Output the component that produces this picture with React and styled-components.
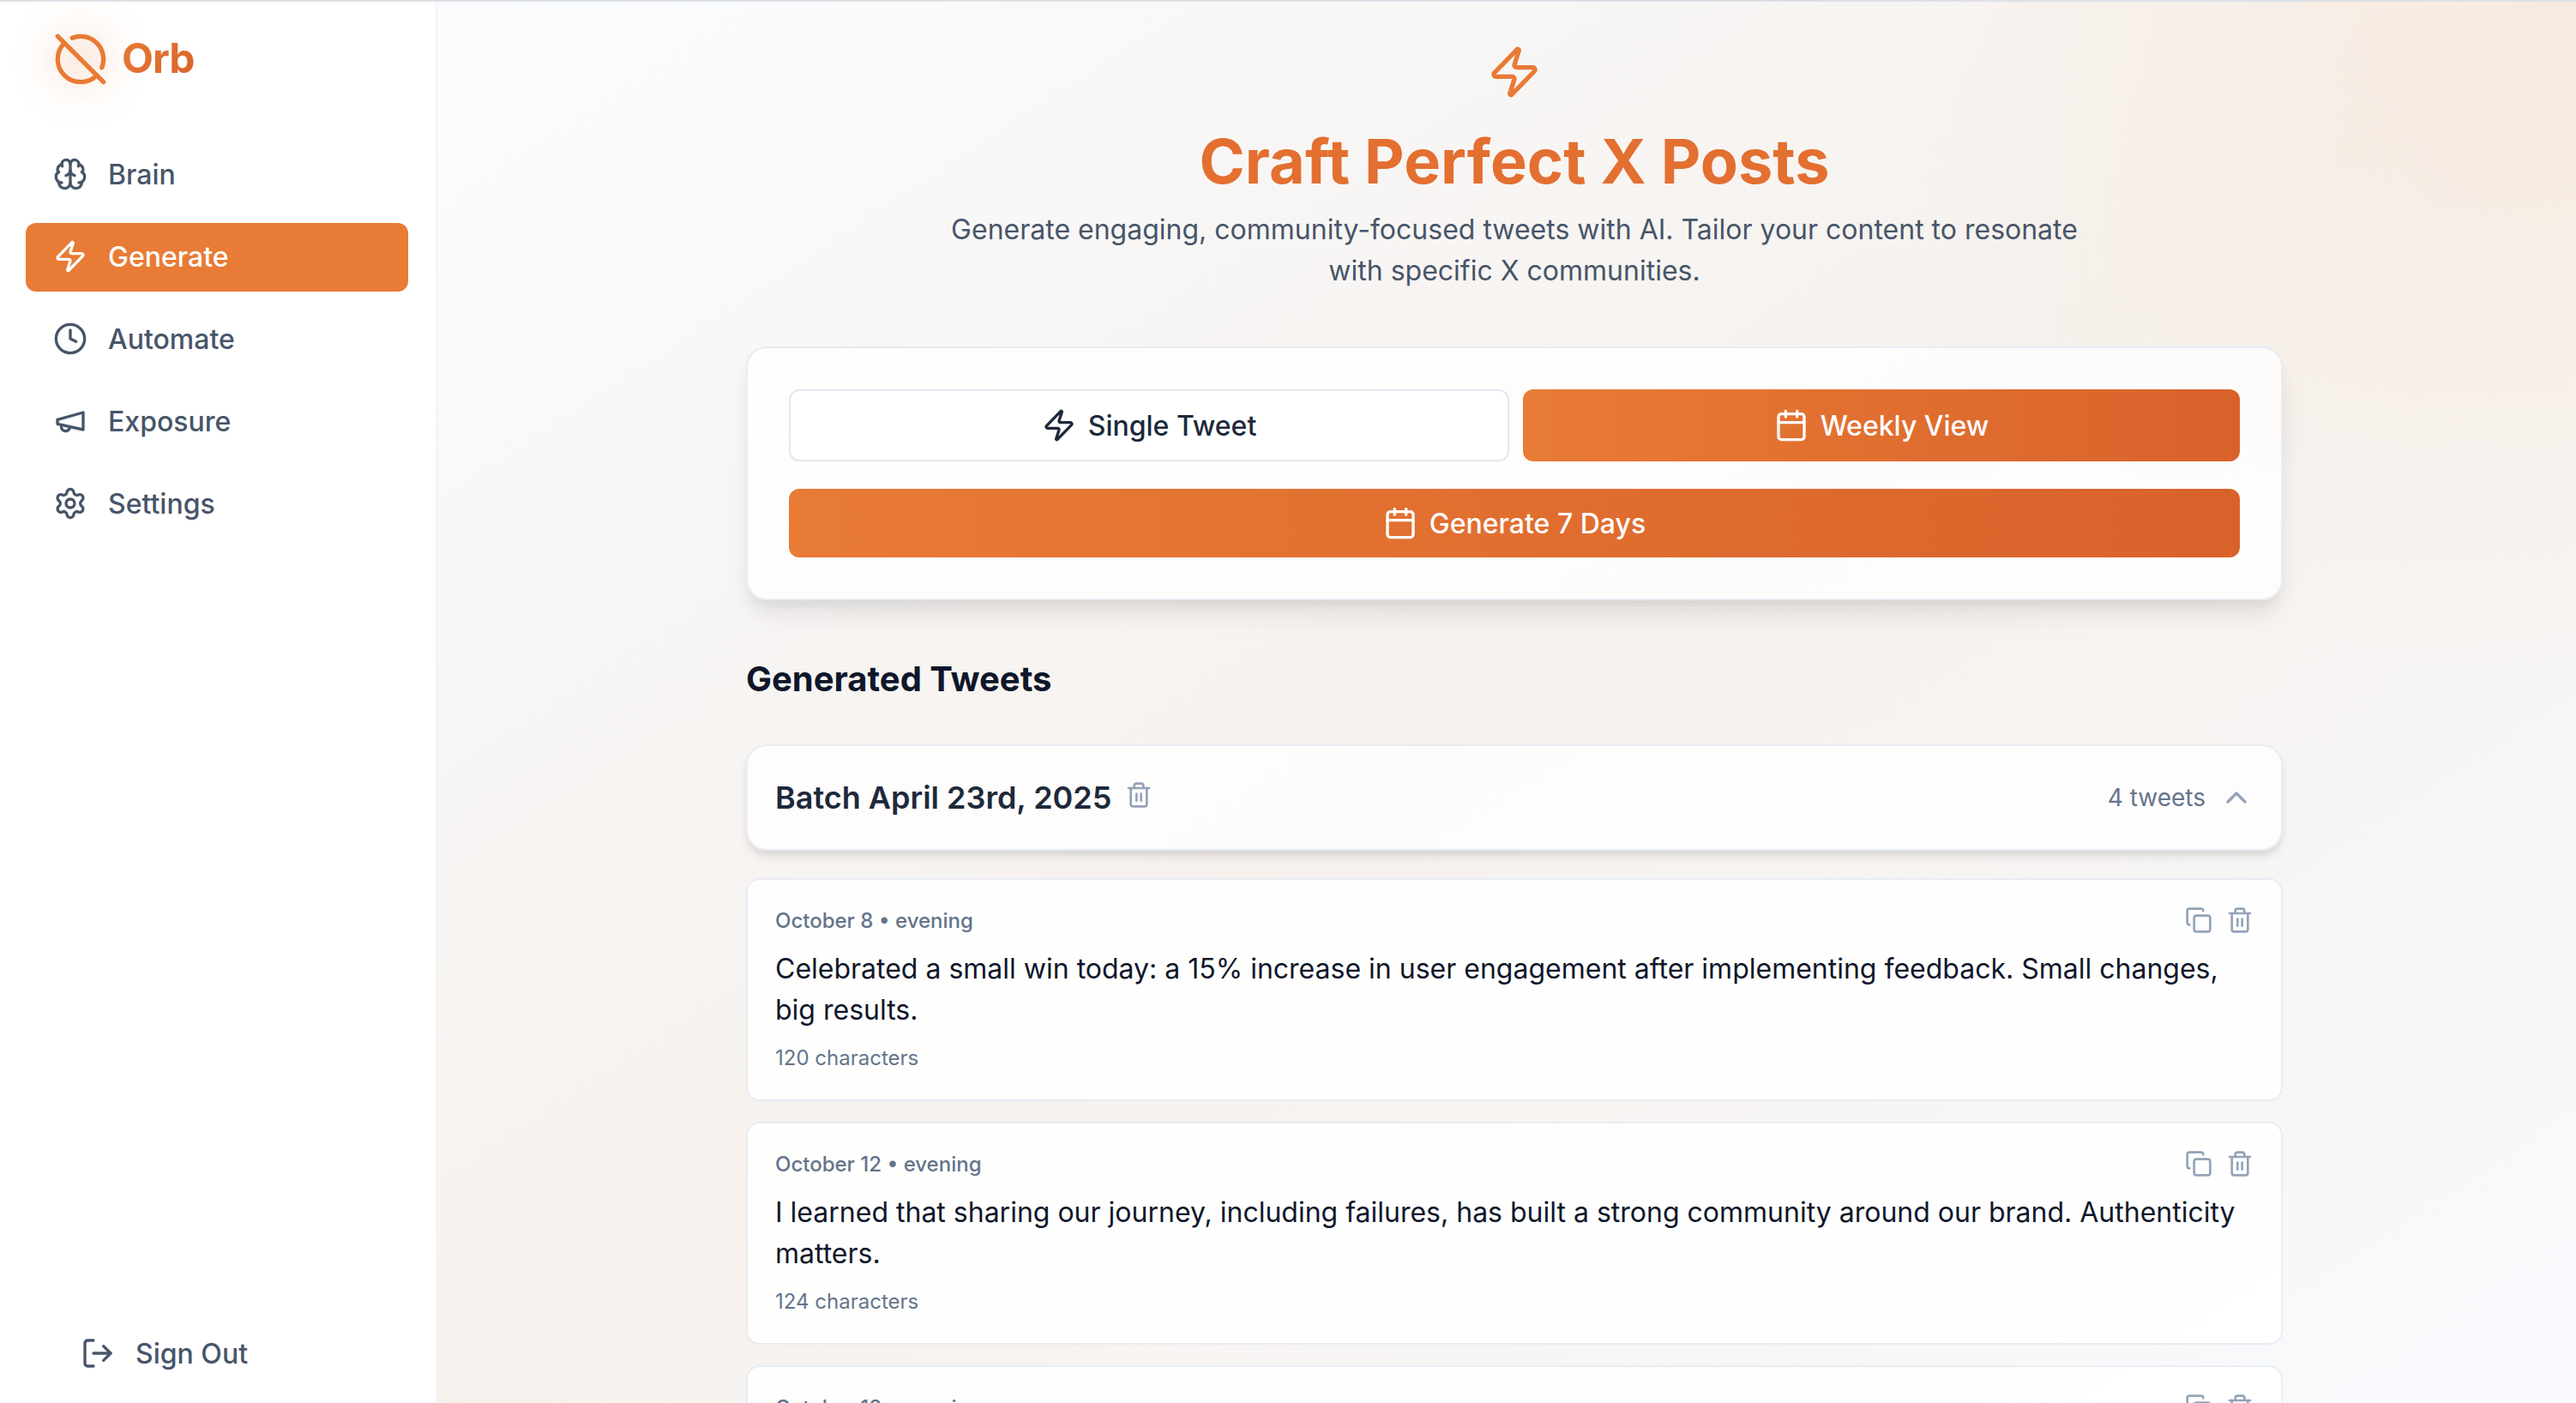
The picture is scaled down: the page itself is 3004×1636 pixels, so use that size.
import styled, { createGlobalStyle } from 'styled-components';
import {
  Brain,
  Zap,
  Clock,
  Settings,
  LogOut,
  Calendar,
  Trash2,
  Copy,
  ChevronUp,
  CircleOff,
} from 'lucide-react';

// the cone-shaped megaphone, lucide's current one has a different outline
function MegaphoneIcon({ size, strokeWidth }) {
  return (
    <svg
      width={size}
      height={size}
      viewBox="0 0 24 24"
      fill="none"
      stroke="currentColor"
      strokeWidth={strokeWidth}
      strokeLinecap="round"
      strokeLinejoin="round"
    >
      <path d="m3 11 18-5v12L3 14v-3z" />
      <path d="M11.6 16.8a3 3 0 1 1-5.8-1.6" />
    </svg>
  );
}

const navItems = [
  { label: 'Brain', icon: Brain },
  { label: 'Generate', icon: Zap, active: true },
  { label: 'Automate', icon: Clock },
  { label: 'Exposure', icon: MegaphoneIcon },
  { label: 'Settings', icon: Settings },
];

const tweets = [
  {
    date: 'October 8 • evening',
    text: 'Celebrated a small win today: a 15% increase in user engagement after implementing feedback. Small changes, big results.',
    count: 120,
  },
  {
    date: 'October 12 • evening',
    text: 'I learned that sharing our journey, including failures, has built a strong community around our brand. Authenticity matters.',
    count: 124,
  },
  {
    date: 'October 18 • evening',
    text: 'Every setback taught us something useful about what our community really needs from us.',
    count: 88,
  },
];

export default function App() {
  return (
    <>
      <GlobalStyle />
      <Page>
        <Sidebar>
          <Logo>
            <LogoIcon>
              <CircleOff size={64} strokeWidth={2} />
            </LogoIcon>
            <LogoText>Orb</LogoText>
          </Logo>
          <Nav>
            {navItems.map(({ label, icon: Icon, active }) => (
              <NavItem key={label} $active={active}>
                <Icon size={40} strokeWidth={2} />
                {label}
              </NavItem>
            ))}
          </Nav>
          <SignOut>
            <LogOut size={40} strokeWidth={2} />
            Sign Out
          </SignOut>
        </Sidebar>

        <Main>
          <Content>
            <Hero>
              <Zap size={64} strokeWidth={2} color="#e87b35" />
              <Title>Craft Perfect X Posts</Title>
              <Subtitle>
                Generate engaging, community-focused tweets with AI. Tailor your content to resonate
                with specific X communities.
              </Subtitle>
            </Hero>

            <ControlCard>
              <ToggleRow>
                <OutlineButton>
                  <Zap size={40} strokeWidth={2} />
                  Single Tweet
                </OutlineButton>
                <PrimaryButton $height={84}>
                  <Calendar size={40} strokeWidth={2} />
                  Weekly View
                </PrimaryButton>
              </ToggleRow>
              <PrimaryButton $height={80}>
                <Calendar size={40} strokeWidth={2} />
                Generate 7 Days
              </PrimaryButton>
            </ControlCard>

            <SectionTitle>Generated Tweets</SectionTitle>

            <BatchCard>
              <BatchTitle>
                Batch April 23rd, 2025
                <Trash2 size={32} strokeWidth={2} color="#94a3b8" />
              </BatchTitle>
              <BatchMeta>
                4 tweets
                <ChevronUp size={40} strokeWidth={2} color="#94a3b8" />
              </BatchMeta>
            </BatchCard>

            <TweetList>
              {tweets.map((tweet) => (
                <TweetCard key={tweet.date}>
                  <TweetHeader>
                    <TweetDate>{tweet.date}</TweetDate>
                    <TweetActions>
                      <Copy size={32} strokeWidth={2} />
                      <Trash2 size={32} strokeWidth={2} />
                    </TweetActions>
                  </TweetHeader>
                  <TweetText>{tweet.text}</TweetText>
                  <TweetCount>{tweet.count} characters</TweetCount>
                </TweetCard>
              ))}
            </TweetList>
          </Content>
        </Main>
      </Page>
    </>
  );
}

const GlobalStyle = createGlobalStyle`
  html, body {
    margin: 0;
    padding: 0;
    height: 100%;
    overflow: hidden;
    font-family: Inter, "Liberation Sans", sans-serif;
  }

  * {
    box-sizing: border-box;
  }
`;

const Page = styled.div`
  display: flex;
  width: 3004px;
  height: 1636px;
  overflow: hidden;
  border-top: 2px solid #dde0e6;
`;

const Sidebar = styled.aside`
  width: 510px;
  flex-shrink: 0;
  display: flex;
  flex-direction: column;
  background: #ffffff;
  border-right: 2px solid #f3f4f6;
`;

const Logo = styled.div`
  display: flex;
  align-items: center;
  gap: 16px;
  padding: 34px 0 0 62px;
  height: 100px;
`;

const LogoIcon = styled.div`
  position: relative;
  display: flex;
  width: 64px;
  height: 64px;
  color: #e87b35;

  &::before {
    content: '';
    position: absolute;
    inset: 0;
    border-radius: 50%;
    background: rgba(232, 123, 53, 0.22);
    filter: blur(24px);
  }

  svg {
    position: relative;
  }
`;

const LogoText = styled.span`
  margin-top: -2px;
  font-size: 48px;
  font-weight: 700;
  line-height: 64px;
  letter-spacing: -1px;
  background: linear-gradient(135deg, #e87b35, #d9622b);
  -webkit-background-clip: text;
  background-clip: text;
  color: transparent;
`;

const Nav = styled.nav`
  display: flex;
  flex-direction: column;
  gap: 16px;
  padding: 62px 32px 0 30px;
`;

const NavItem = styled.a`
  display: flex;
  align-items: center;
  gap: 24px;
  height: 80px;
  padding: 0 32px 2px;
  border-radius: 12px;
  font-size: 32px;
  font-weight: 500;
  color: ${({ $active }) => ($active ? '#ffffff' : '#475569')};
  background: ${({ $active }) => ($active ? '#e87b35' : 'transparent')};
`;

const SignOut = styled.a`
  display: flex;
  align-items: center;
  gap: 24px;
  height: 80px;
  margin-top: auto;
  margin-bottom: 18px;
  padding-left: 94px;
  font-size: 32px;
  font-weight: 500;
  color: #475569;
`;

const Main = styled.main`
  flex: 1;
  height: 100%;
  overflow: hidden;
  padding: 0 342px 0 360px;
  background:
    radial-gradient(circle at top right, rgba(248, 230, 215, 0.6), rgba(248, 230, 215, 0) 800px),
    linear-gradient(to bottom right, #fafcfe 0%, #f6f1ed 50%, #f8fafd 100%);
`;

const Content = styled.div`
  width: 1792px;
`;

const Hero = styled.header`
  display: flex;
  flex-direction: column;
  align-items: center;
  padding-top: 50px;
  text-align: center;
`;

const Title = styled.h1`
  margin: 32px 0 0;
  font-size: 72px;
  font-weight: 700;
  line-height: 80px;
  color: #e36f30;
`;

const Subtitle = styled.p`
  width: 1344px;
  margin: 16px 0 0;
  font-size: 32px;
  line-height: 48px;
  color: #475569;
`;

const ControlCard = styled.section`
  display: flex;
  flex-direction: column;
  gap: 32px;
  margin-top: 64px;
  padding: 48px;
  background: rgba(255, 255, 255, 0.8);
  border: 2px solid #e8ecf3;
  border-radius: 24px;
  box-shadow: 0 20px 30px -6px rgba(0, 0, 0, 0.1), 0 8px 12px -4px rgba(0, 0, 0, 0.05);
`;

const ToggleRow = styled.div`
  display: grid;
  grid-template-columns: 1fr 836px;
  gap: 16px;
`;

const OutlineButton = styled.button`
  display: flex;
  align-items: center;
  justify-content: center;
  gap: 14px;
  height: 84px;
  background: #ffffff;
  border: 2px solid #e2e8f0;
  border-radius: 12px;
  font-family: inherit;
  font-size: 32px;
  font-weight: 500;
  color: #1e293b;
`;

const PrimaryButton = styled.button`
  display: flex;
  align-items: center;
  justify-content: center;
  gap: 14px;
  height: ${({ $height }) => $height}px;
  border: none;
  border-radius: 12px;
  background: linear-gradient(to right, #e87b35, #d9622b);
  font-family: inherit;
  font-size: 32px;
  font-weight: 500;
  color: #ffffff;
`;

const SectionTitle = styled.h2`
  margin: 64px 0 0;
  font-size: 40px;
  font-weight: 700;
  line-height: 56px;
  color: #0f172a;
`;

const BatchCard = styled.div`
  display: flex;
  align-items: center;
  justify-content: space-between;
  height: 124px;
  margin-top: 48px;
  padding: 0 32px;
  background: rgba(255, 255, 255, 0.8);
  border: 2px solid #e8ecf3;
  border-radius: 24px;
  box-shadow: 0 8px 12px -2px rgba(0, 0, 0, 0.1), 0 4px 8px -2px rgba(0, 0, 0, 0.06);
`;

const BatchTitle = styled.div`
  display: flex;
  align-items: center;
  gap: 16px;
  font-size: 36px;
  font-weight: 600;
  color: #1e293b;

  svg {
    margin-top: -6px;
  }
`;

const BatchMeta = styled.div`
  display: flex;
  align-items: center;
  gap: 16px;
  font-size: 28px;
  color: #64748b;
`;

const TweetList = styled.div`
  display: flex;
  flex-direction: column;
  gap: 24px;
  margin-top: 32px;
`;

const TweetCard = styled.article`
  flex-shrink: 0;
  height: 260px;
  padding: 31px 32px;
  background: rgba(255, 255, 255, 0.88);
  border: 2px solid #e8ecf3;
  border-radius: 16px;
`;

const TweetHeader = styled.div`
  display: flex;
  align-items: center;
  justify-content: space-between;
  height: 32px;
`;

const TweetDate = styled.span`
  font-size: 24px;
  font-weight: 500;
  color: #64748b;
`;

const TweetActions = styled.div`
  display: flex;
  gap: 16px;
  color: #94a3b8;
`;

const TweetText = styled.p`
  margin: 17px 0 0;
  font-size: 32px;
  line-height: 48px;
  color: #0f172a;
`;

const TweetCount = styled.div`
  margin-top: 16px;
  font-size: 24px;
  line-height: 32px;
  color: #64748b;
`;
